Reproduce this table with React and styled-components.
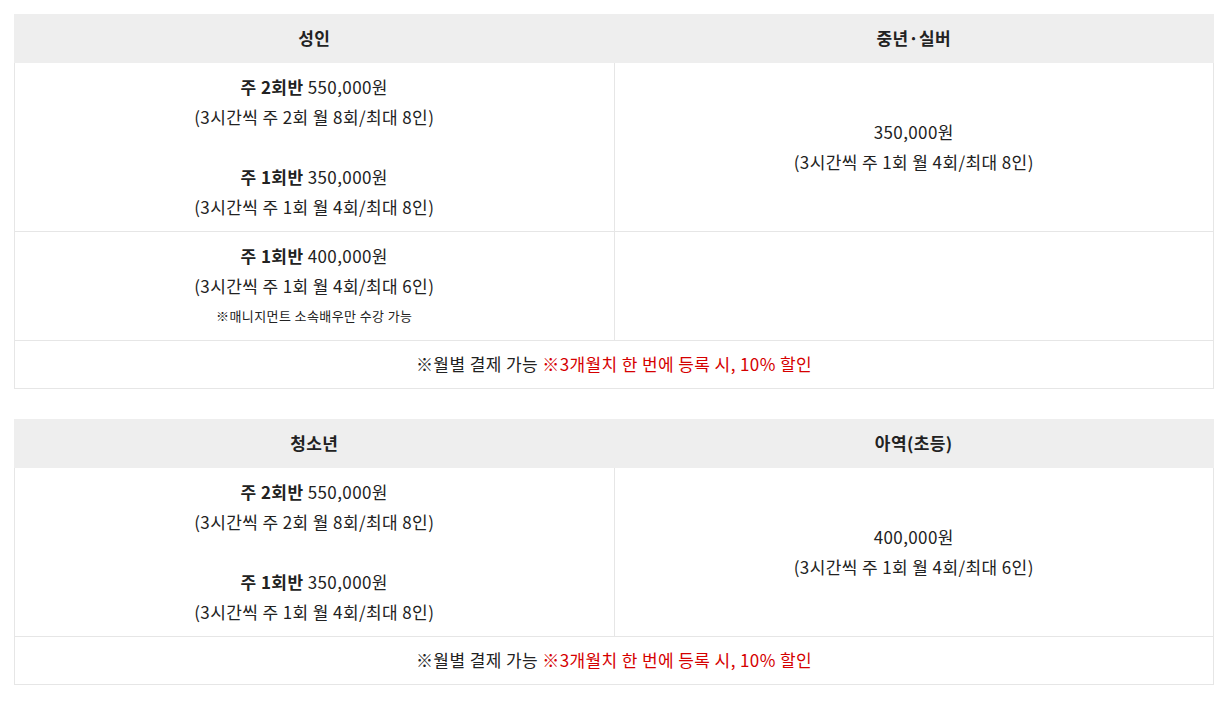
import React from 'react'
import styled, { createGlobalStyle } from 'styled-components'

const GlobalStyle = createGlobalStyle`
  body {
    margin: 0;
    background: #fff;
    font-family: 'Noto Sans CJK KR', 'Noto Sans', sans-serif;
    color: #222;
  }
`

const Page = styled.div`
  padding: 14px;
  display: flex;
  flex-direction: column;
  gap: 30px;
`

const PriceTable = styled.table`
  width: 1200px;
  border-collapse: collapse;
  table-layout: fixed;
  font-size: 17px;
  line-height: 30px;
  letter-spacing: 0.4px;
  text-align: center;
`

const Th = styled.th`
  background: #eeeeee;
  font-weight: 700;
  padding: 8px 10px 9px;
  border: 1px solid #eeeeee;
  color: #222;
`

const Td = styled.td`
  padding: ${({ $slim }) => ($slim ? '8px 10px 9px' : '9px 10px')};
  border: 1px solid #e6e6e6;
  vertical-align: middle;
`

const Line = styled.div`
  min-height: 30px;
`

const Note = styled.div`
  font-size: 13px;
  line-height: 30px;
`

const Red = styled.span`
  color: #d50000;
`

function Plan({ label, price, detail }) {
  return (
    <>
      <Line>
        {label && <b>{label} </b>}
        {price}
      </Line>
      <Line>{detail}</Line>
    </>
  )
}

function Footer() {
  return (
    <tr>
      <Td $slim colSpan={2}>
        ※월별 결제 가능 <Red>※3개월치 한 번에 등록 시, 10% 할인</Red>
      </Td>
    </tr>
  )
}

export default function App() {
  return (
    <>
      <GlobalStyle />
      <Page>
        <PriceTable>
          <thead>
            <tr>
              <Th>성인</Th>
              <Th>중년·실버</Th>
            </tr>
          </thead>
          <tbody>
            <tr>
              <Td>
                <Plan label="주 2회반" price="550,000원" detail="(3시간씩 주 2회 월 8회/최대 8인)" />
                <Line />
                <Plan label="주 1회반" price="350,000원" detail="(3시간씩 주 1회 월 4회/최대 8인)" />
              </Td>
              <Td>
                <Plan price="350,000원" detail="(3시간씩 주 1회 월 4회/최대 8인)" />
              </Td>
            </tr>
            <tr>
              <Td>
                <Plan label="주 1회반" price="400,000원" detail="(3시간씩 주 1회 월 4회/최대 6인)" />
                <Note>※매니지먼트 소속배우만 수강 가능</Note>
              </Td>
              <Td />
            </tr>
            <Footer />
          </tbody>
        </PriceTable>

        <PriceTable>
          <thead>
            <tr>
              <Th>청소년</Th>
              <Th>아역(초등)</Th>
            </tr>
          </thead>
          <tbody>
            <tr>
              <Td>
                <Plan label="주 2회반" price="550,000원" detail="(3시간씩 주 2회 월 8회/최대 8인)" />
                <Line />
                <Plan label="주 1회반" price="350,000원" detail="(3시간씩 주 1회 월 4회/최대 8인)" />
              </Td>
              <Td>
                <Plan price="400,000원" detail="(3시간씩 주 1회 월 4회/최대 6인)" />
              </Td>
            </tr>
            <Footer />
          </tbody>
        </PriceTable>
      </Page>
    </>
  )
}
